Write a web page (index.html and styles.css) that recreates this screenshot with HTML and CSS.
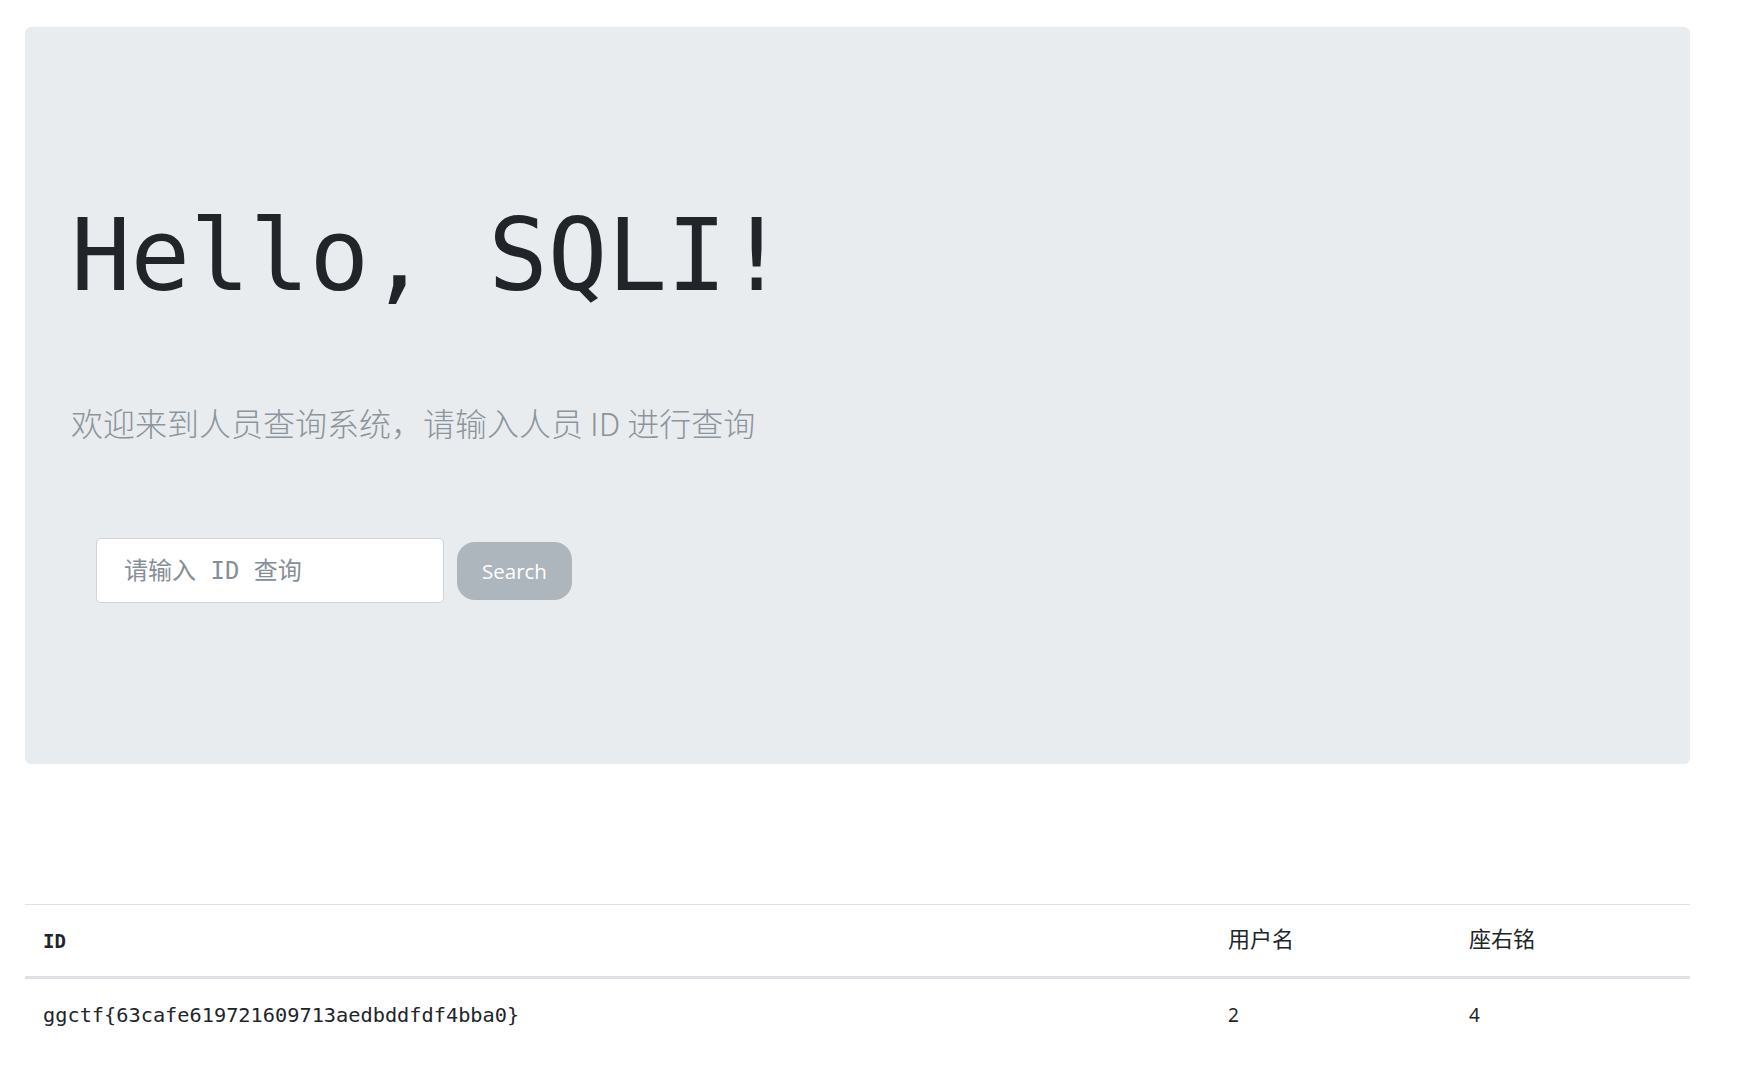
FILE: index.html
```html
<!DOCTYPE html>
<html lang="zh-CN">
<head>
<meta charset="utf-8">
<title>Hello, SQLI!</title>
<link rel="stylesheet" href="styles.css">
</head>
<body>
<div class="page">
  <section class="jumbo">
    <h1 class="title">Hello, SQLI!</h1>
    <p class="lead">欢迎来到人员查询系统，请输入人员 ID 进行查询</p>
    <form class="search">
      <input class="search-input" type="text" placeholder="请输入 ID 查询">
      <button class="search-btn" type="button">Search</button>
    </form>
  </section>
  <table class="results">
    <colgroup>
      <col class="c-id">
      <col class="c-user">
      <col class="c-motto">
    </colgroup>
    <thead>
      <tr>
        <th class="th-id">ID</th>
        <th class="th-cjk">用户名</th>
        <th class="th-cjk">座右铭</th>
      </tr>
    </thead>
    <tbody>
      <tr>
        <td class="td-mono">ggctf{63cafe619721609713aedbddfdf4bba0}</td>
        <td class="td-sans">2</td>
        <td class="td-sans">4</td>
      </tr>
    </tbody>
  </table>
</div>
</body>
</html>
```

FILE: styles.css
```css
html, body {
  margin: 0;
  padding: 0;
  background: #ffffff;
  color: #212529;
  font-family: "Noto Sans", "Noto Sans CJK SC", sans-serif;
}

.page {
  margin-left: 25px;
  width: 1665px;
  padding-top: 27px;
}

.jumbo {
  background: #e9ecef;
  border-radius: 6px;
  padding: 169px 46px 162px 46px;
  height: 737px;
  box-sizing: border-box;
}

.title {
  margin: 0;
  font-family: "DejaVu Sans Mono", monospace;
  font-weight: 400;
  font-size: 99px;
  line-height: 120px;
  color: #212529;
  letter-spacing: 0;
}

.lead {
  margin: 82px 0 0 0;
  font-family: "Noto Sans CJK SC", sans-serif;
  font-weight: 300;
  font-size: 32px;
  line-height: 48px;
  color: #8c949c;
}

.search {
  margin: 92px 0 0 25px;
  display: flex;
  align-items: center;
  gap: 13px;
}

.search-input {
  width: 348px;
  height: 65px;
  box-sizing: border-box;
  border: 1px solid #ced4da;
  border-radius: 5px;
  background: #ffffff;
  padding: 0 0 0 27px;
  font-family: "DejaVu Sans Mono", "Noto Sans CJK SC", monospace;
  font-size: 24px;
  color: #495057;
  outline: none;
}

.search-input::placeholder {
  color: #868e96;
  opacity: 1;
}

.search-btn {
  width: 115px;
  height: 58px;
  border: none;
  border-radius: 18px;
  background: #adb5bd;
  color: #ffffff;
  font-family: "Open Sans", sans-serif;
  font-size: 20.5px;
  padding: 0;
  cursor: pointer;
}

.results {
  margin-top: 140px;
  width: 1665px;
  border-collapse: collapse;
  table-layout: fixed;
}

.c-id { width: 1185px; }
.c-user { width: 241px; }
.c-motto { width: 239px; }

.results th,
.results td {
  text-align: left;
  padding: 0 18px;
  vertical-align: middle;
  color: #212529;
}

.results thead th {
  height: 71px;
  border-top: 1px solid #dee2e6;
  border-bottom: 3px solid #dee2e6;
}

.results thead th.th-cjk {
  height: 63px;
  padding-bottom: 8px;
}

.results tbody td {
  height: 72px;
}

.th-id {
  font-family: "DejaVu Sans Mono", monospace;
  font-weight: 700;
  font-size: 19px;
}

.th-cjk {
  font-family: "Noto Sans CJK SC", serif;
  font-weight: 400;
  font-size: 22px;
}

.td-mono {
  font-family: "DejaVu Sans Mono", monospace;
  font-size: 20.3px;
}

.td-sans {
  font-family: "Noto Sans", sans-serif;
  font-size: 19px;
}
```
